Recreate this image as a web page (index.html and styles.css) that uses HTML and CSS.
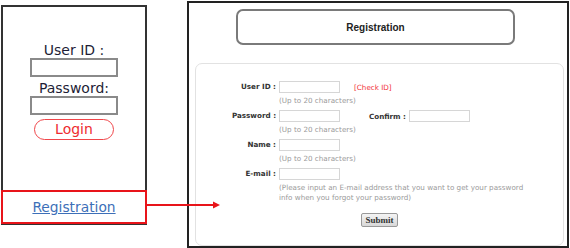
FILE: index.html
```html
<!DOCTYPE html>
<html lang="en">
<head>
    <meta charset="UTF-8">
    <meta name="viewport" content="width=device-width, initial-scale=1.0">
    <title>Login and Registration</title>
    <link rel="stylesheet" href="styles.css">
</head>
<body>
    <div class="login-panel">
        <div class="login-form">
            <label class="login-label" for="loginId">User ID :</label>
            <input class="login-input" type="text" id="loginId">
            <label class="login-label" for="loginPw">Password:</label>
            <input class="login-input" type="password" id="loginPw">
            <button class="login-button" type="button">Login</button>
        </div>
        <div class="login-footer">
            <a href="#" class="register-link">Registration</a>
        </div>
    </div>

    <div class="arrow">
        <svg width="75" height="8" viewBox="0 0 75 8">
            <line x1="0" y1="4" x2="68" y2="4" stroke="#e8141a" stroke-width="2"/>
            <polygon points="67,0.5 74,4 67,7.5" fill="#e8141a"/>
        </svg>
    </div>

    <div class="signup-panel">
        <div class="title-box">Registration</div>
        <div class="form-box">
            <div class="field">
                <span class="field-label">User ID :</span>
                <div class="field-control">
                    <input class="text-input" type="text">
                    <span class="check-id">[Check ID]</span>
                </div>
                <span class="hint">(Up to 20 characters)</span>
            </div>
            <div class="field">
                <span class="field-label">Password :</span>
                <div class="field-control">
                    <input class="text-input" type="password">
                    <span class="confirm-label">Confirm :</span>
                    <input class="text-input" type="password">
                </div>
                <span class="hint">(Up to 20 characters)</span>
            </div>
            <div class="field">
                <span class="field-label">Name :</span>
                <div class="field-control">
                    <input class="text-input" type="text">
                </div>
                <span class="hint">(Up to 20 characters)</span>
            </div>
            <div class="field">
                <span class="field-label">E-mail :</span>
                <div class="field-control">
                    <input class="text-input" type="text">
                </div>
                <span class="hint">(Please input an E-mail address that you want to get your password<br>info when you forgot your password)</span>
            </div>
            <div class="submit-row">
                <button class="submit-button" type="button">Submit</button>
            </div>
        </div>
    </div>
</body>
</html>
```

FILE: styles.css
```css
body {
    margin: 0;
    padding: 1px 0 0 1px;
    background: #fff;
    display: flex;
    align-items: flex-start;
    font-family: "DejaVu Sans", Verdana, sans-serif;
    position: relative;
}
.login-panel {
    margin-top: 4px;
    width: 146px;
    height: 219px;
    box-sizing: border-box;
    border: 2px solid #333;
    display: flex;
    flex-direction: column;
}
.login-form {
    flex: 1;
    display: flex;
    flex-direction: column;
    align-items: center;
    padding-top: 35px;
}
.login-label {
    font-size: 14px;
    line-height: 16px;
    color: #1e1e36;
}
.login-input {
    width: 88px;
    height: 19px;
    box-sizing: border-box;
    border: 2px solid #8a8a8a;
    margin: 0 0 3px;
    padding: 0;
}
.login-button {
    width: 80px;
    height: 21px;
    margin-top: 1px;
    border: 1.5px solid #f0464a;
    border-radius: 11px;
    background: #fff;
    color: #ee2b30;
    font-family: "DejaVu Sans", Verdana, sans-serif;
    font-size: 14px;
    padding: 0;
    line-height: 17px;
}
.login-footer {
    height: 30px;
    margin: 0 -2px -2px;
    border: 2px solid #e8141a;
    box-shadow: 0 1px 0 #333;
    display: flex;
    justify-content: center;
    align-items: center;
}
.register-link {
    font-size: 13.8px;
    color: #3d6fb8;
    text-decoration: underline;
}
.arrow {
    position: absolute;
    left: 146px;
    top: 201px;
    line-height: 0;
}
.signup-panel {
    margin-left: 40px;
    width: 382px;
    height: 247px;
    box-sizing: border-box;
    border: 2px solid #222;
    display: flex;
    flex-direction: column;
    align-items: center;
}
.title-box {
    margin: 6px 5px 0 0;
    width: 279px;
    height: 36px;
    box-sizing: border-box;
    border: 2px solid #7a7a7a;
    border-radius: 7px;
    font-family: "Liberation Sans", Arial, sans-serif;
    font-weight: bold;
    font-size: 10px;
    color: #222;
    display: flex;
    justify-content: center;
    align-items: center;
}
.form-box {
    margin-top: 18px;
    width: 369px;
    height: 183px;
    box-sizing: border-box;
    border: 1px solid #e2e2e2;
    border-radius: 7px;
    padding-top: 17px;
    margin-left: 3px;
}
.field {
    display: grid;
    grid-template-columns: 80px 1fr;
    column-gap: 3px;
    row-gap: 3px;
    margin-bottom: 4px;
}
.field-label {
    text-align: right;
    font-size: 7.2px;
    font-weight: bold;
    color: #333;
    line-height: 12px;
}
.field-control {
    display: flex;
    align-items: center;
    height: 12px;
}
.text-input {
    width: 61px;
    height: 12px;
    box-sizing: border-box;
    border: 1px solid #d6d6d6;
    padding: 0;
    margin: 0;
}
.check-id {
    margin-left: 14px;
    font-size: 7.2px;
    color: #f2323a;
}
.confirm-label {
    width: 66px;
    margin-right: 3px;
    text-align: right;
    font-size: 7.2px;
    font-weight: bold;
    color: #333;
}
.hint {
    grid-column: 2;
    font-size: 7.2px;
    line-height: 10px;
    color: #9a9a9a;
}
.submit-row {
    display: flex;
    justify-content: center;
    padding-top: 6px;
}
.submit-button {
    height: 14px;
    padding: 0 3px;
    border: 1px solid #999;
    border-radius: 2px;
    background: linear-gradient(#f4f4f4, #d8d8d8);
    font-family: "Liberation Serif", "Times New Roman", serif;
    font-weight: bold;
    font-size: 9px;
    color: #333;
    line-height: 12px;
}
```
